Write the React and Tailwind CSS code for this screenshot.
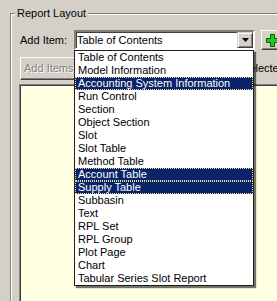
const items = [
  "Table of Contents",
  "Model Information",
  "Accounting System Information",
  "Run Control",
  "Section",
  "Object Section",
  "Slot",
  "Slot Table",
  "Method Table",
  "Account Table",
  "Supply Table",
  "Subbasin",
  "Text",
  "RPL Set",
  "RPL Group",
  "Plot Page",
  "Chart",
  "Tabular Series Slot Report",
];
const selected = new Set([2, 9, 10]);

export default function App() {
  return (
    <div className="relative w-[277px] h-[301px] overflow-hidden bg-[#d4d0c8] text-[11px] leading-[13px] text-black font-['Liberation_Sans',Arial,sans-serif]">
      {/* Group box */}
      <div className="relative ml-[10px] mt-[13px] w-[300px] h-[300px] border-l border-t border-[#808080] shadow-[inset_1px_1px_0_#ffffff] pl-[8px] pt-[16px]">
        <div className="absolute left-[4px] top-[-7px] px-[2px] bg-[#d4d0c8] leading-[13px]">Report Layout</div>

        {/* Row 1 */}
        <div className="flex items-center h-[20px]">
          <div className="shrink-0 w-[55px] pl-[1px] whitespace-nowrap">Add Item:</div>
          <div className="shrink-0 flex items-center w-[181px] h-[20px] bg-white border-2 border-t-[#808080] border-l-[#808080] border-b-white border-r-white shadow-[inset_1px_1px_0_#404040]">
            <div className="flex-1 pl-[1px] whitespace-nowrap overflow-hidden">Table of Contents</div>
            <div className="shrink-0 flex items-center justify-center w-[16px] h-[16px] bg-[#d4d0c8] border border-t-[#d4d0c8] border-l-[#d4d0c8] border-b-[#404040] border-r-[#404040] shadow-[inset_1px_1px_0_#ffffff,inset_-1px_-1px_0_#808080]">
              <svg width="7" height="4" viewBox="0 0 7 4">
                <polygon points="0,0 7,0 3.5,4" fill="#000" />
              </svg>
            </div>
          </div>
          <div className="shrink-0 ml-[6px] flex items-center pl-[4px] w-[30px] h-[20px] bg-[#d4d0c8] border border-t-white border-l-white border-b-[#404040] border-r-[#404040] shadow-[inset_-1px_-1px_0_#808080]">
            <svg width="13" height="13" viewBox="0 0 13 13">
              <polygon
                points="4.5,0.5 8.5,0.5 8.5,4.5 12.5,4.5 12.5,8.5 8.5,8.5 8.5,12.5 4.5,12.5 4.5,8.5 0.5,8.5 0.5,4.5 4.5,4.5"
                fill="#1ec81e"
                stroke="#0a5a0a"
                strokeWidth="1"
              />
            </svg>
          </div>
        </div>

        {/* Row 2 */}
        <div className="flex items-center mt-[7px] h-[23px]">
          <div className="shrink-0 ml-[1px] flex items-center pl-[3px] w-[60px] h-[23px] whitespace-nowrap bg-[#d4d0c8] border border-t-white border-l-white border-b-[#404040] border-r-[#404040] shadow-[inset_-1px_-1px_0_#808080] text-[#808080] [text-shadow:1px_1px_0_#ffffff]">
            Add Items
          </div>
          <div className="shrink-0 ml-[162px] whitespace-nowrap">Selected Items</div>
        </div>

        {/* Yellow panel */}
        <div className="mt-[4px] w-[280px] h-[230px] bg-[#ffffe1] border-l border-t border-[#808080] shadow-[inset_1px_1px_0_#404040]"></div>
      </div>

      {/* Dropdown list */}
      <div className="absolute left-[74px] top-[50px] w-[180px] bg-white border border-[#202020] shadow-[2px_2px_1px_rgba(0,0,0,0.55)]">
        {items.map((t, i) => (
          <div
            key={t}
            className={
              selected.has(i)
                ? "h-[13px] pl-[2px] whitespace-nowrap border border-dotted border-[#f5db95] bg-[#0a246a] text-white leading-[11px]"
                : "h-[13px] pl-[3px] whitespace-nowrap leading-[13px]"
            }
          >
            {t}
          </div>
        ))}
      </div>
    </div>
  );
}
